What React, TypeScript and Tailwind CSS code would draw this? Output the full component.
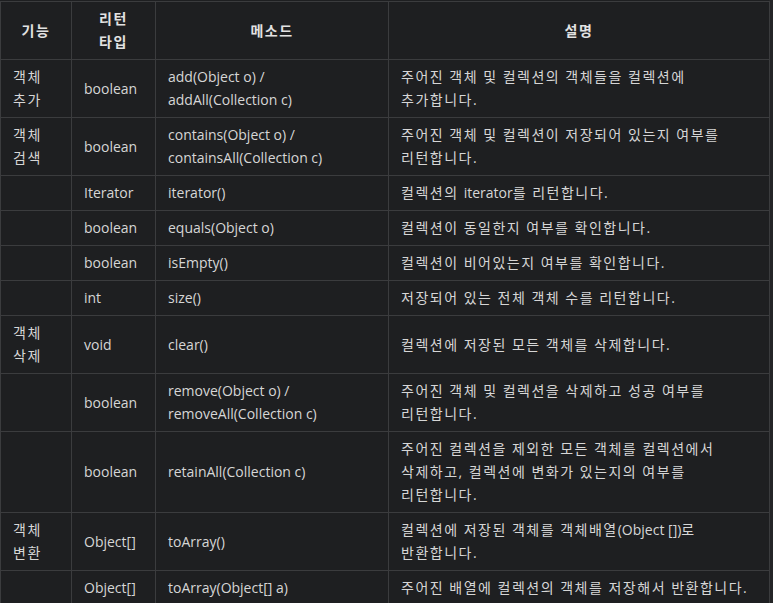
const rows: { kind: string[]; ret: string; method: string[]; desc: string[] }[] = [
  { kind: ["객체", "추가"], ret: "boolean", method: ["add(Object o) /", "addAll(Collection c)"], desc: ["주어진 객체 및 컬렉션의 객체들을 컬렉션에", "추가합니다."] },
  { kind: ["객체", "검색"], ret: "boolean", method: ["contains(Object o) /", "containsAll(Collection c)"], desc: ["주어진 객체 및 컬렉션이 저장되어 있는지 여부를", "리턴합니다."] },
  { kind: [], ret: "Iterator", method: ["iterator()"], desc: ["컬렉션의 iterator를 리턴합니다."] },
  { kind: [], ret: "boolean", method: ["equals(Object o)"], desc: ["컬렉션이 동일한지 여부를 확인합니다."] },
  { kind: [], ret: "boolean", method: ["isEmpty()"], desc: ["컬렉션이 비어있는지 여부를 확인합니다."] },
  { kind: [], ret: "int", method: ["size()"], desc: ["저장되어 있는 전체 객체 수를 리턴합니다."] },
  { kind: ["객체", "삭제"], ret: "void", method: ["clear()"], desc: ["컬렉션에 저장된 모든 객체를 삭제합니다."] },
  { kind: [], ret: "boolean", method: ["remove(Object o) /", "removeAll(Collection c)"], desc: ["주어진 객체 및 컬렉션을 삭제하고 성공 여부를", "리턴합니다."] },
  { kind: [], ret: "boolean", method: ["retainAll(Collection c)"], desc: ["주어진 컬렉션을 제외한 모든 객체를 컬렉션에서", "삭제하고, 컬렉션에 변화가 있는지의 여부를", "리턴합니다."] },
  { kind: ["객체", "변환"], ret: "Object[]", method: ["toArray()"], desc: ["컬렉션에 저장된 객체를 객체배열(Object [])로", "반환합니다."] },
  { kind: [], ret: "Object[]", method: ["toArray(Object[] a)"], desc: ["주어진 배열에 컬렉션의 객체를 저장해서 반환합니다."] },
];

const cell = "border border-[#3b3c3e] px-[12px] py-[6px] align-middle";

// hangul runs are set a little wider, like the original's Korean face
function Line({ text }: { text: string }) {
  const parts = text.split(/([\uAC00-\uD7A3][\uAC00-\uD7A3 ,.]*)/).filter(Boolean);
  return (
    <div className="h-[22px] leading-[22px] whitespace-nowrap">
      {parts.map((p, i) =>
        /[\uAC00-\uD7A3]/.test(p) ? (
          <span key={i} className="tracking-[1.5px]">
            {p}
          </span>
        ) : (
          <span key={i}>{p}</span>
        )
      )}
    </div>
  );
}

function Lines({ items }: { items: string[] }) {
  return (
    <div className="flex flex-col gap-[1px]">
      {items.map((t) => (
        <Line key={t} text={t} />
      ))}
    </div>
  );
}

export default function App() {
  return (
    <div
      className="w-[773px] h-[603px] overflow-hidden bg-[#242527] text-[14px] text-[#d6d6d6]"
      style={{ fontFamily: '"Open Sans", "Noto Sans CJK KR", sans-serif' }}
    >
      <div className="w-[769px] bg-[#1e1f21] pt-[1px]">
        <table className="w-[769px] table-fixed border-collapse">
          <colgroup>
            <col className="w-[71px]" />
            <col className="w-[84px]" />
            <col className="w-[233px]" />
            <col className="w-[381px]" />
          </colgroup>
          <thead>
            <tr className="font-bold text-[#e2e2e2]">
              <th className={`${cell} text-center`}>
                <Lines items={["기능"]} />
              </th>
              <th className={`${cell} text-center`}>
                <Lines items={["리턴", "타입"]} />
              </th>
              <th className={`${cell} text-center`}>
                <Lines items={["메소드"]} />
              </th>
              <th className={`${cell} text-center`}>
                <Lines items={["설명"]} />
              </th>
            </tr>
          </thead>
          <tbody>
            {rows.map((r, i) => (
              <tr key={i}>
                <td className={cell}>
                  <Lines items={r.kind} />
                </td>
                <td className={cell}>
                  <Lines items={[r.ret]} />
                </td>
                <td className={cell}>
                  <Lines items={r.method} />
                </td>
                <td className={cell}>
                  <Lines items={r.desc} />
                </td>
              </tr>
            ))}
          </tbody>
        </table>
      </div>
    </div>
  );
}
